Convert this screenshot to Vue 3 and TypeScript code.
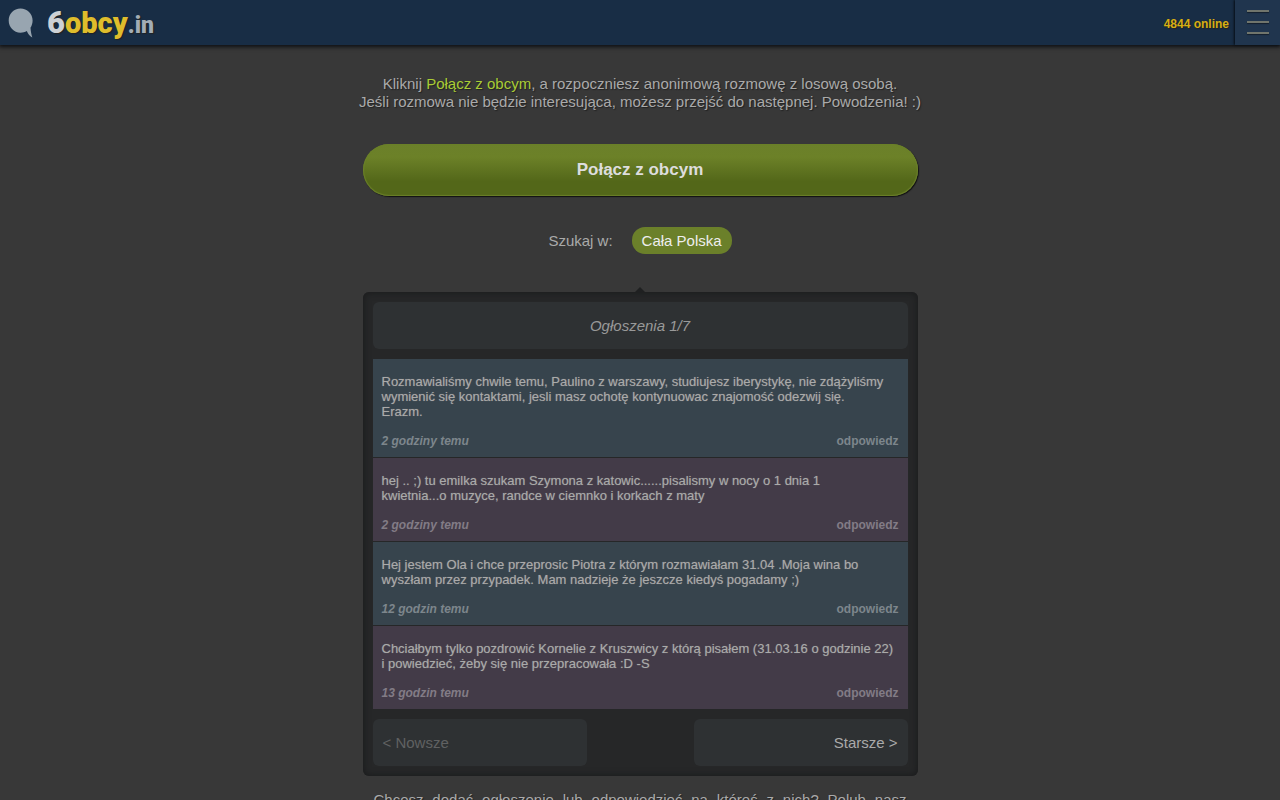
<script setup lang="ts">
import { ref } from 'vue'

interface Post {
  id: number
  lines: string[]
  time: string
}

const online = ref<number>(4844)
const page = ref<number>(1)
const pages = 7

const posts: Post[] = [
  {
    id: 1,
    lines: [
      'Rozmawialiśmy chwile temu, Paulino z warszawy, studiujesz iberystykę, nie zdążyliśmy',
      'wymienić się kontaktami, jesli masz ochotę kontynuowac znajomość odezwij się.',
      'Erazm.',
    ],
    time: '2 godziny temu',
  },
  {
    id: 2,
    lines: [
      'hej .. ;) tu emilka szukam Szymona z katowic......pisalismy w nocy o 1 dnia 1',
      'kwietnia...o muzyce, randce w ciemnko i korkach z maty',
    ],
    time: '2 godziny temu',
  },
  {
    id: 3,
    lines: [
      'Hej jestem Ola i chce przeprosic Piotra z którym rozmawiałam 31.04 .Moja wina bo',
      'wyszłam przez przypadek. Mam nadzieje że jeszcze kiedyś pogadamy ;)',
    ],
    time: '12 godzin temu',
  },
  {
    id: 4,
    lines: [
      'Chciałbym tylko pozdrowić Kornelie z Kruszwicy z którą pisałem (31.03.16 o godzinie 22)',
      'i powiedzieć, żeby się nie przepracowała :D -S',
    ],
    time: '13 godzin temu',
  },
]
</script>

<template>
  <div class="page">
    <header class="topbar">
      <a href="#" class="brand">
        <svg class="bubble" viewBox="0 0 26 30" width="26" height="30" aria-hidden="true">
          <path
            d="M12.500 0.500C5.800 0.500 0.700 5.800 0.700 12.500C0.700 19.200 5.800 24.700 12.500 24.700C14.800 24.700 17 24.100 18.800 23.100C20 26 21.500 28.300 24.300 29.500C23.400 26.800 22.800 23.800 22.500 19.800C23.800 17.700 24.600 15.200 24.600 12.500C24.600 5.800 19.200 0.500 12.500 0.500Z"
          />
        </svg>
        <span class="wordmark"><span class="six">6</span><span class="obcy">obcy</span><span class="tld">.in</span></span>
      </a>
      <div class="right">
        <span class="online">{{ online }} online</span>
        <button type="button" class="menu" aria-haspopup="true">
          <span class="bar"></span>
          <span class="bar"></span>
          <span class="bar"></span>
        </button>
      </div>
    </header>

    <main class="content">
      <p class="intro">
        Kliknij <span class="accent">Połącz z obcym</span>, a rozpoczniesz anonimową rozmowę z losową osobą.<br />
        Jeśli rozmowa nie będzie interesująca, możesz przejść do następnej. Powodzenia! :)
      </p>

      <button type="button" class="connect">Połącz z obcym</button>

      <div class="search">
        <span id="search-label">Szukaj w:</span>
        <button id="region" type="button" class="region" aria-labelledby="search-label region">Cała Polska</button>
      </div>

      <section class="panel">
        <h2 class="title">Ogłoszenia {{ page }}/{{ pages }}</h2>
        <div class="posts">
          <article v-for="post in posts" :key="post.id" class="post">
            <p class="text">{{ post.lines.join('\n') }}</p>
            <footer class="meta">
              <em>{{ post.time }}</em>
              <a href="#">odpowiedz</a>
            </footer>
          </article>
        </div>
        <nav class="pager">
          <button type="button" class="newer" disabled>&lt; Nowsze</button>
          <button type="button" class="older">Starsze &gt;</button>
        </nav>
      </section>

      <p class="note">Chcesz dodać ogłoszenie lub odpowiedzieć na któreś z nich? Polub nasz</p>
    </main>
  </div>
</template>

<style>
body {
  background: #383838;
}

html {
  scrollbar-width: none;
}
</style>

<style scoped>
.page {
  font-family: 'Liberation Sans', Arial, sans-serif;
  font-size: 15px;
  line-height: 18px;
  color: #aaa;
  text-shadow: 1px 1px 1px #222;
}

button {
  font: inherit;
  text-shadow: inherit;
  border: 0;
  cursor: pointer;
}

p,
h2 {
  margin: 0;
}

.topbar {
  display: flex;
  justify-content: space-between;
  height: 45px;
  background: #182d45;
  box-shadow: 0 1px 4px 1px #0c0f13;
}

.brand {
  display: flex;
  align-items: center;
  gap: 13px;
  padding-left: 8px;
  text-decoration: none;
}

.bubble {
  fill: #98a5b0;
}

.wordmark {
  padding-top: 4px;
  font-family: Roboto, 'Open Sans', sans-serif;
  font-weight: 900;
  font-size: 29px;
  line-height: 40px;
  color: #cdd1d5;
}

.six {
  font-size: 31px;
}

.obcy {
  color: #dfbd2c;
}

.tld {
  font-size: 23px;
  color: #a3adb6;
}

.right {
  display: flex;
  align-items: center;
  gap: 6px;
}

.online {
  padding-top: 2px;
  font-size: 12px;
  font-weight: bold;
  color: #d7ae12;
}

.menu {
  display: flex;
  flex-direction: column;
  align-items: center;
  gap: 9px;
  width: 45px;
  height: 45px;
  padding: 10px 0 0;
  background: #20354e;
  box-shadow: -1px 0 2px #070d15;
}

.bar {
  width: 22px;
  height: 2px;
  background: #70756c;
  box-shadow: 0 1px 1px #14202e;
}

.content {
  max-width: 555px;
  margin: 0 auto;
  padding-top: 30px;
}

.intro {
  margin: 0 -10px;
  text-align: center;
}

.accent {
  color: #a9cc35;
}

.connect {
  display: block;
  width: 100%;
  height: 52px;
  margin-top: 33px;
  border-radius: 26px;
  background: linear-gradient(#6b802a 0%, #6c8128 25%, #536719 72%, #536719 100%);
  box-shadow: 1px 1px 1px #111, inset 0 0 1px 1px #6b8029;
  font-size: 17px;
  font-weight: bold;
  text-shadow: none;
  color: #ddd;
}

.search {
  display: flex;
  align-items: center;
  justify-content: center;
  gap: 19px;
  margin-top: 31px;
  text-shadow: none;
}

.region {
  height: 27px;
  padding: 0 10px;
  border-radius: 13px;
  background: #6b802a;
  color: #eee;
}

.panel {
  position: relative;
  margin-top: 38px;
  padding: 10px;
  border-radius: 6px;
  background: #262728;
  box-shadow: inset 0 0 6px 1px #1b1c1d;
  text-shadow: none;
}

.panel::before {
  content: '';
  position: absolute;
  top: -5px;
  left: 50%;
  margin-left: -5px;
  border: 5px solid transparent;
  border-top: 0;
  border-bottom-color: #1f2021;
}

.title {
  border-radius: 6px;
  background: #2e3133;
  font-size: 15px;
  font-weight: normal;
  font-style: italic;
  line-height: 47px;
  text-align: center;
  color: #999;
}

.posts {
  display: flex;
  flex-direction: column;
  gap: 1px;
  margin: 10px 0;
}

.post {
  padding: 15px 9px 8px;
  background: #37444d;
  font-size: 13px;
  line-height: 15px;
}

.post:nth-child(even) {
  background: #433b48;
}

.text {
  white-space: pre-line;
  text-shadow: 0 0 1px #777;
}

.meta {
  display: flex;
  justify-content: space-between;
  margin-top: 15px;
  font-size: 12px;
  font-weight: bold;
  color: #7d868c;
}

.post:nth-child(even) .meta {
  color: #827c86;
}

.meta a {
  color: inherit;
  text-decoration: none;
}

.pager {
  display: flex;
  justify-content: space-between;
}

.pager button {
  width: 40%;
  height: 47px;
  padding: 0 10px;
  border-radius: 6px;
  background: #2e3133;
  color: #aaa;
}

.pager .newer {
  text-align: left;
  color: #606162;
  cursor: default;
}

.pager .older {
  text-align: right;
}

.note {
  padding: 15px 11px 0;
  text-align: justify;
  text-align-last: justify;
}
</style>
